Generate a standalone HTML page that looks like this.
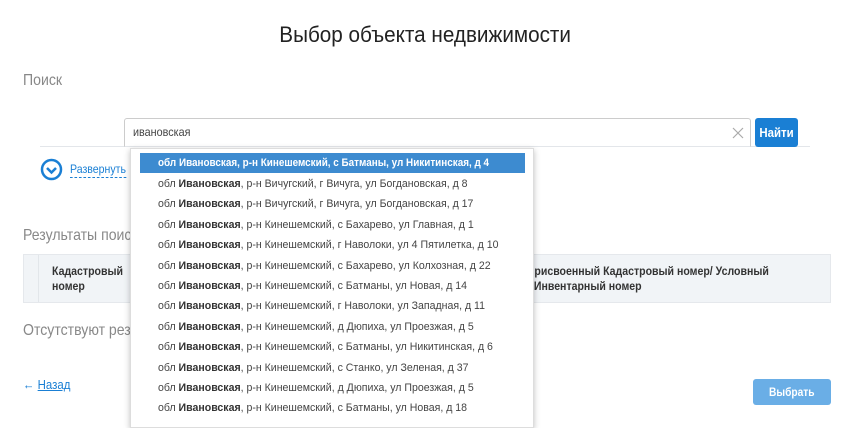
<!DOCTYPE html>
<html><head><meta charset="utf-8"><style>
*{margin:0;padding:0;box-sizing:border-box}
body{width:851px;height:419px;overflow:hidden;background:#fff;font-family:"Liberation Sans",sans-serif;position:relative;color:#333}
.a{position:absolute;white-space:nowrap}
.c{transform:scaleX(.88);transform-origin:left top}
.dd{position:absolute;left:130px;top:148px;width:404px;height:280px;background:#fff;border:1px solid #ddd;box-shadow:0 2px 6px rgba(0,0,0,.25)}
.it{position:absolute;left:9px;width:385px;height:20px;font-size:11px;line-height:20px;padding-left:18px;color:#444;white-space:nowrap}
.it span{display:inline-block;transform:scaleX(.96);transform-origin:left center}
.it b{color:#333}
.hl{background:#3d8bd0;color:#fff}
.hl b{color:#fff}
</style></head><body>
<div class="a" style="left:0;width:851px;top:22px;text-align:center;font-size:22px;color:#222"><span style="display:inline-block;transform:scaleX(.94)">Выбор объекта недвижимости</span></div>
<div class="a c" style="left:23px;top:72px;font-size:16px;color:#888">Поиск</div>
<div class="a" style="left:40px;top:146px;width:770px;height:1px;background:#e3e6ea"></div>
<div class="a" style="left:124px;top:118px;width:627px;height:29px;border:1px solid #ccc;border-bottom-color:#e3e6ea;border-radius:3px 3px 0 0;font-size:12px;line-height:27px;padding-left:8px;color:#444"><span style="display:inline-block;transform:scaleX(.9);transform-origin:left">ивановская</span>
<svg style="position:absolute;right:6px;top:8px" width="12" height="12"><path d="M1 1L11 11M11 1L1 11" stroke="#aaa" stroke-width="1.2"/></svg></div>
<div class="a" style="left:755px;top:118px;width:43px;height:29px;background:#1a7fd4;border-radius:3px;color:#fff;font-weight:bold;font-size:13px;line-height:29px;text-align:center"><span style="display:inline-block;transform:scaleX(.88)">Найти</span></div>
<svg class="a" style="left:40px;top:158px" width="23" height="23"><circle cx="11.5" cy="11.5" r="9.5" fill="none" stroke="#1a7fd4" stroke-width="2.5"/><path d="M7 10L11.5 14.5L16 10" fill="none" stroke="#1a7fd4" stroke-width="2.5"/></svg>
<div class="a c" style="left:70px;top:162px;font-size:12px;color:#1a7fd4;border-bottom:1px dashed #1a7fd4;line-height:15px">Развернуть</div>
<div class="a c" style="left:23px;top:227px;font-size:16px;color:#888">Результаты поиска</div>
<div class="a" style="left:23px;top:254px;width:808px;height:49px;background:#f1f4f7;border:1px solid #e5e8ec"></div>
<div class="a" style="left:38px;top:255px;width:1px;height:47px;background:#e2e6ea"></div>
<div class="a c" style="left:52px;top:264px;font-size:12px;font-weight:bold;line-height:15px">Кадастровый<br>номер</div>
<div class="a c" style="left:528px;top:264px;font-size:12px;font-weight:bold;line-height:15px">присвоенный Кадастровый номер/ Условный<br>/ Инвентарный номер</div>
<div class="a c" style="left:23px;top:322px;font-size:16px;color:#888">Отсутствуют результаты</div>
<div class="a c" style="left:23px;top:377px;font-size:13px;color:#1a7fd4">← <u>Назад</u></div>
<div class="a" style="left:753px;top:379px;width:78px;height:26px;background:#6aaee6;border-radius:3px;color:#fff;font-weight:bold;font-size:12px;line-height:26px;text-align:center"><span style="display:inline-block;transform:scaleX(.85)">Выбрать</span></div>
<div class="dd">
<div class="it hl" style="top:4px"><span style="transform:scaleX(.9)"><b>обл Ивановская, р-н Кинешемский, с Батманы, ул Никитинская, д 4</b></span></div>
<div class="it" style="top:25px"><span>обл <b>Ивановская</b>, р-н Вичугский, г Вичуга, ул Богдановская, д 8</span></div>
<div class="it" style="top:45px"><span>обл <b>Ивановская</b>, р-н Вичугский, г Вичуга, ул Богдановская, д 17</span></div>
<div class="it" style="top:66px"><span>обл <b>Ивановская</b>, р-н Кинешемский, с Бахарево, ул Главная, д 1</span></div>
<div class="it" style="top:86px"><span>обл <b>Ивановская</b>, р-н Кинешемский, г Наволоки, ул 4 Пятилетка, д 10</span></div>
<div class="it" style="top:107px"><span>обл <b>Ивановская</b>, р-н Кинешемский, с Бахарево, ул Колхозная, д 22</span></div>
<div class="it" style="top:127px"><span>обл <b>Ивановская</b>, р-н Кинешемский, с Батманы, ул Новая, д 14</span></div>
<div class="it" style="top:147px"><span>обл <b>Ивановская</b>, р-н Кинешемский, г Наволоки, ул Западная, д 11</span></div>
<div class="it" style="top:168px"><span>обл <b>Ивановская</b>, р-н Кинешемский, д Дюпиха, ул Проезжая, д 5</span></div>
<div class="it" style="top:188px"><span>обл <b>Ивановская</b>, р-н Кинешемский, с Батманы, ул Никитинская, д 6</span></div>
<div class="it" style="top:209px"><span>обл <b>Ивановская</b>, р-н Кинешемский, с Станко, ул Зеленая, д 37</span></div>
<div class="it" style="top:229px"><span>обл <b>Ивановская</b>, р-н Кинешемский, д Дюпиха, ул Проезжая, д 5</span></div>
<div class="it" style="top:249px"><span>обл <b>Ивановская</b>, р-н Кинешемский, с Батманы, ул Новая, д 18</span></div>
</div>
</body></html>
